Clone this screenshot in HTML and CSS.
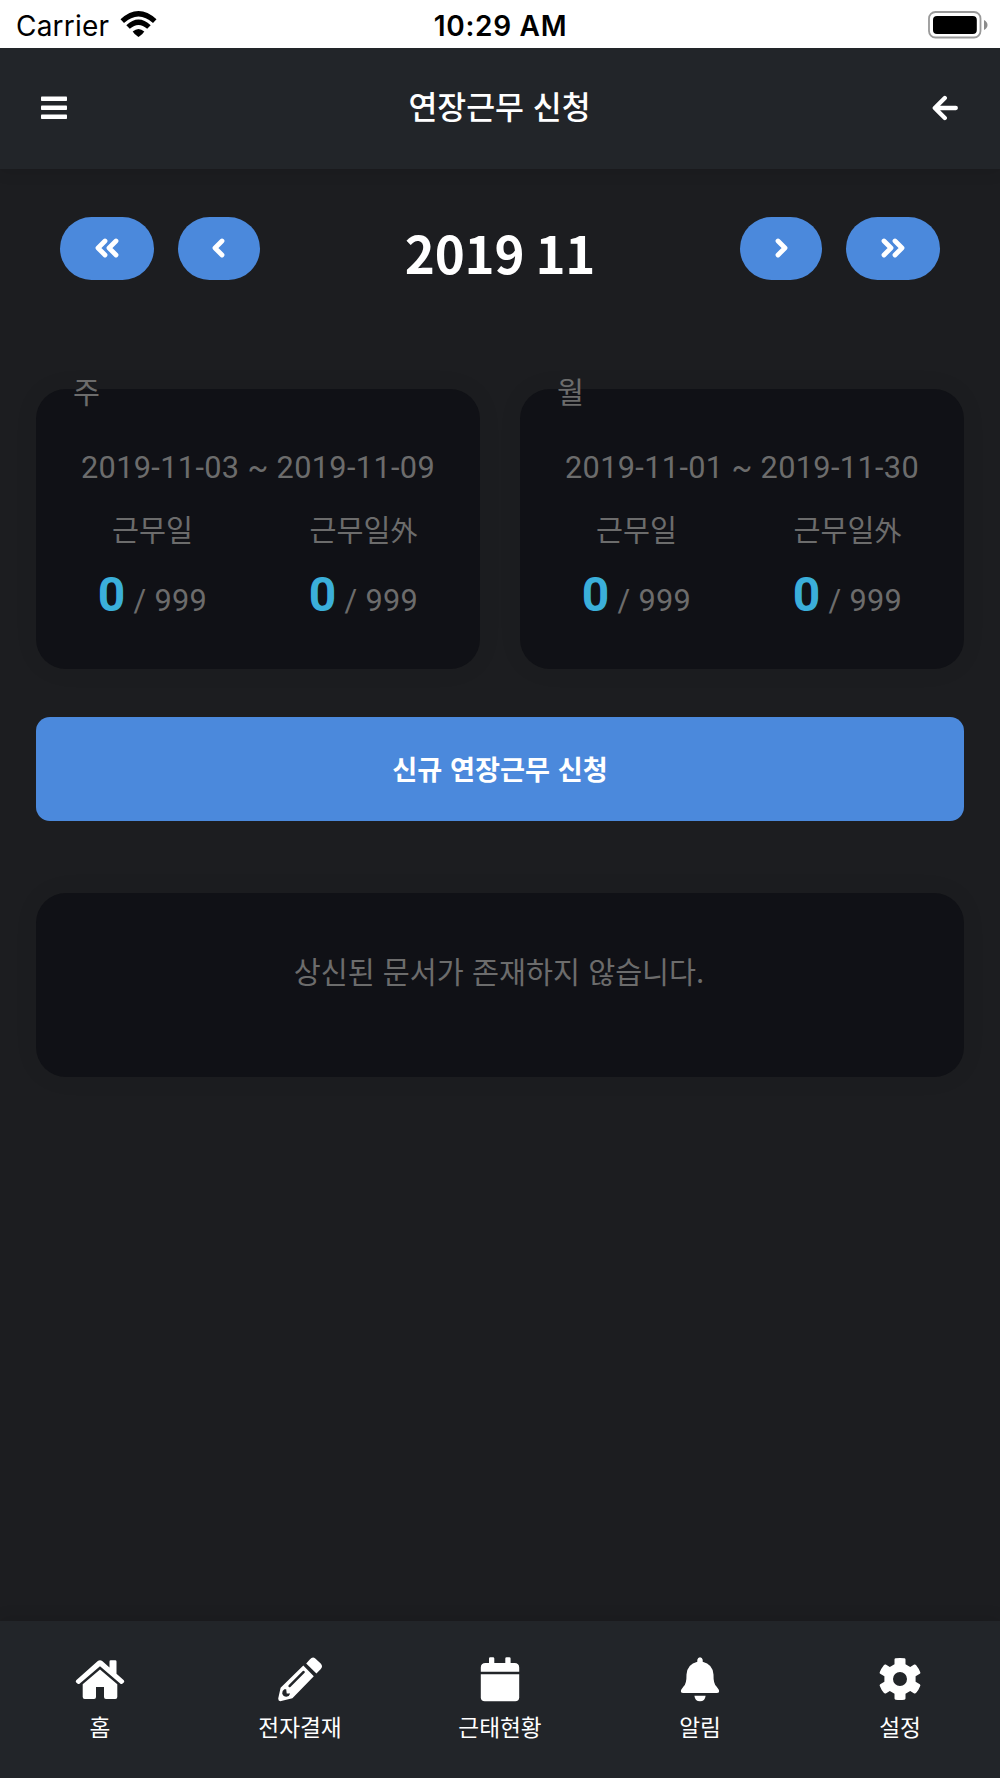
FILE: index.html
```html
<!DOCTYPE html>
<html lang="ko">
<head>
    <meta charset="UTF-8">
    <title>연장근무 신청</title>
    <link rel="stylesheet" href="styles.css">
</head>
<body>
<!-- Status bar -->
<div class="status-bar">
    <div class="carrier">
        <span>Carrier</span>
        <svg class="wifi" width="37" height="28" viewBox="0 0 37 28">
            <path d="M0.5 9.2Q18.5 -7.4 36.5 9.2L33 13Q18.5 0 4 13Z"/>
            <path d="M6.3 15.2Q18.5 3.8 30.7 15.2L27.2 18.8Q18.5 11 9.8 18.8Z"/>
            <path d="M12.7 21.4Q18.5 16.4 24.3 21.4Q23 24 18.5 27Q14 24 12.7 21.4Z"/>
        </svg>
    </div>
    <div class="clock">10:29 AM</div>
    <svg class="battery" width="60" height="28" viewBox="0 0 60 28">
        <rect x="1" y="1" width="51.5" height="25.5" rx="6.5" fill="none" stroke="#999" stroke-width="1.8"/>
        <rect x="5" y="5" width="43.8" height="18" rx="4" fill="#000"/>
        <path d="M56 9Q59.5 11 59.5 14Q59.5 17 56 19Z" fill="#8c8c8c"/>
    </svg>
</div>

<header class="header">
    <svg class="header-icon" width="26" height="24" viewBox="0 0 26 24" fill="#fff">
        <rect y="0.5" width="26" height="4.6" rx="0.8"/>
        <rect y="9.5" width="26" height="4.6" rx="0.8"/>
        <rect y="18.5" width="26" height="4.6" rx="0.8"/>
    </svg>
    <h1>연장근무 신청</h1>
    <svg class="header-icon" width="26" height="26" viewBox="0 0 26 26" fill="none" stroke="#fff" stroke-width="4.3" stroke-linecap="round" stroke-linejoin="round">
        <path d="M12.8 3L2.8 13L12.8 23M3 13H23.8"/>
    </svg>
</header>

<main class="content">
    <!-- Month navigation -->
    <div class="month-nav">
        <div class="nav-buttons">
            <button class="pill pill-wide">
                <svg width="24" height="20" viewBox="0 0 24 20"><path d="M10 3L3 10L10 17M21 3L14 10L21 17"/></svg>
            </button>
            <button class="pill">
                <svg width="13" height="20" viewBox="0 0 13 20"><path d="M10 3L3 10L10 17"/></svg>
            </button>
        </div>
        <h2>2019 11</h2>
        <div class="nav-buttons">
            <button class="pill">
                <svg width="13" height="20" viewBox="0 0 13 20"><path d="M3 3L10 10L3 17"/></svg>
            </button>
            <button class="pill pill-wide">
                <svg width="24" height="20" viewBox="0 0 24 20"><path d="M3 3L10 10L3 17M14 3L21 10L14 17"/></svg>
            </button>
        </div>
    </div>

    <!-- Weekly / monthly totals -->
    <div class="summary">
        <section class="card">
            <h3>주</h3>
            <p class="period">2019-11-03 ~ 2019-11-09</p>
            <div class="hours">
                <div class="hours-item">
                    <span class="label">근무일</span>
                    <span class="value"><b>0</b> / 999</span>
                </div>
                <div class="hours-item">
                    <span class="label">근무일<span class="hanja">外</span></span>
                    <span class="value"><b>0</b> / 999</span>
                </div>
            </div>
        </section>
        <section class="card">
            <h3>월</h3>
            <p class="period">2019-11-01 ~ 2019-11-30</p>
            <div class="hours">
                <div class="hours-item">
                    <span class="label">근무일</span>
                    <span class="value"><b>0</b> / 999</span>
                </div>
                <div class="hours-item">
                    <span class="label">근무일<span class="hanja">外</span></span>
                    <span class="value"><b>0</b> / 999</span>
                </div>
            </div>
        </section>
    </div>

    <button class="new-btn">신규 연장근무 신청</button>

    <div class="card empty">상신된 문서가 존재하지 않습니다.</div>
</main>

<!-- Bottom tabs -->
<nav class="tab-bar">
    <a class="tab">
        <svg width="50" height="46" viewBox="0 0 50 46" fill="#fff">
            <path d="M1.2 24.2L22.8 5Q25 3.4 27.2 5L34.5 11.5V5.5Q34.5 4.2 35.8 4.2H40.2Q41.5 4.2 41.5 5.5V17.7L48.8 24.2Q49.8 25.4 48.8 26.4L47.3 27.7Q46.2 28.4 45.2 27.5L25 10.2L4.8 27.5Q3.8 28.4 2.7 27.7L1.2 26.4Q0.2 25.4 1.2 24.2Z"/>
            <path d="M25 13.5L42.3 28.2V41Q42.3 43 40.3 43H31Q29 43 29 41V31H21V41Q21 43 19 43H9.7Q7.7 43 7.7 41V28.2Z"/>
        </svg>
        <span>홈</span>
    </a>
    <a class="tab">
        <svg width="46" height="46" viewBox="0 0 46 46" fill="#fff">
            <path d="M29.2 7.6L33 3.2Q35.5 0.4 38.3 2.4L43.7 7.6Q46.4 10.4 43.6 13.2L39.4 17.6Z"/>
            <path fill-rule="evenodd" d="M26.3 9.4L36.8 20.2L15.4 42.2L4.2 45Q1.2 45.7 1.2 42.5L3.6 31.8ZM25.8 15.1L11.6 29.3Q11 30.2 11.8 31Q12.6 31.6 13.4 31L27.6 16.8Q28.2 16 27.5 15.3Q26.7 14.5 25.8 15.1ZM7.4 33.2Q5 34.8 5.2 37.4Q6.4 40.6 9.4 40.8Q12.6 40.2 13.2 37.5H9.7L9.2 33.2Z"/>
        </svg>
        <span>전자결재</span>
    </a>
    <a class="tab">
        <svg width="40" height="46" viewBox="0 0 40 46" fill="#fff">
            <path d="M0.8 15.8V11.5Q0.8 7 5.5 7H9V2.5Q9 1.2 10.3 1.2H13Q14.3 1.2 14.3 2.5V7H25.3V2.5Q25.3 1.2 26.6 1.2H29.3Q30.6 1.2 30.6 2.5V7H34.5Q39.2 7 39.2 11.5V15.8Z"/>
            <path d="M0.8 18.3H39.2V41.2Q39.2 45.2 35.2 45.2H4.8Q0.8 45.2 0.8 41.2Z"/>
        </svg>
        <span>근태현황</span>
    </a>
    <a class="tab">
        <svg width="40" height="46" viewBox="0 0 40 46" fill="#fff">
            <path d="M17.3 5.8V3.8Q17.8 1.2 20 1.2Q22.2 1.2 22.7 3.8V5.8Q32.7 8.2 33.5 18.5Q33.3 28.2 36.7 30.8L38.8 33.7Q40 36.8 36.8 37.1H3.2Q0 36.8 1.2 33.7L3.3 30.8Q6.7 28.2 6.5 18.5Q7.3 8.2 17.3 5.8Z"/>
            <path d="M14.4 39.7H25.6Q25 45.2 20 45.2Q15 45.2 14.4 39.7Z"/>
        </svg>
        <span>알림</span>
    </a>
    <a class="tab">
        <svg width="42" height="46" viewBox="0 0 42 46" fill="#fff">
            <path fill-rule="evenodd" d="M15.5 3.4Q15.6 2.4 16.6 2.3Q21 1.6 25.4 2.3Q26.4 2.4 26.5 3.4V8.2L31.2 10.9L35.2 8.6Q36.2 8.1 37 8.9Q39.8 12.3 41.3 16.3Q41.6 17.3 40.8 17.8L36.6 20.3V25.7L40.8 28.2Q41.6 28.7 41.3 29.7Q39.8 33.7 37 37.1Q36.2 37.9 35.2 37.4L31.2 35.1L26.5 37.8V42.6Q26.4 43.6 25.4 43.7Q21 44.4 16.6 43.7Q15.6 43.6 15.5 42.6V37.8L10.8 35.1L6.8 37.4Q5.8 37.9 5 37.1Q2.2 33.7 0.7 29.7Q0.4 28.7 1.2 28.2L5.4 25.7V20.3L1.2 17.8Q0.4 17.3 0.7 16.3Q2.2 12.3 5 8.9Q5.8 8.1 6.8 8.6L10.8 10.9L15.5 8.2ZM21 16A7 7 0 1 0 21 30A7 7 0 1 0 21 16Z"/>
        </svg>
        <span>설정</span>
    </a>
</nav>
</body>
</html>
```
FILE: styles.css
```css
* {
    box-sizing: border-box;
}
body {
    margin: 0;
    height: 1778px;
    display: flex;
    flex-direction: column;
    background-color: #1c1d20;
    color: #fff;
    font-family: "Noto Sans CJK KR", sans-serif;
    overflow: hidden;
}
h1, h2, h3, p {
    margin: 0;
}
button {
    border: none;
    color: #fff;
    background-color: #4b89dc;
    font-family: inherit;
    cursor: pointer;
}

/* Status bar */
.status-bar {
    flex: none;
    position: relative; /* keeps the header shadow below it */
    z-index: 1;
    height: 48px;
    padding: 0 12px 0 16px;
    display: grid;
    grid-template-columns: 1fr auto 1fr;
    align-items: center;
    background-color: #fff;
    color: #000;
    font-family: Inter, sans-serif;
    font-size: 28px;
    line-height: 48px;
}
.carrier {
    display: flex;
    align-items: center;
    gap: 11px;
    letter-spacing: 0.2px;
}
.wifi {
    margin-bottom: 3px;
}
.clock {
    padding: 2px 3px 0 0;
    font-weight: 600;
    letter-spacing: 0.7px;
}
.carrier span {
    padding-top: 2px;
}
.battery {
    justify-self: end;
}

/* Header */
.header {
    flex: none;
    height: 121px;
    padding: 0 42px 2px 41px;
    display: flex;
    align-items: center;
    justify-content: space-between;
    background-color: #222529;
    box-shadow: 0 0 16px rgba(0, 0, 0, 0.15);
}
.header h1 {
    margin-bottom: 3px;
    font-size: 31.4px;
    font-weight: 500;
    line-height: 48px;
}

.content {
    flex: 1;
    padding: 48px 36px 0;
}

/* Month navigation */
.month-nav {
    display: flex;
    justify-content: space-between;
    align-items: flex-start;
    height: 172px;
    padding: 0 24px;
}
.month-nav h2 {
    font-size: 51px;
    font-weight: 700;
    line-height: 70px;
    letter-spacing: -0.2px;
    word-spacing: -3px;
}
.nav-buttons {
    display: flex;
    gap: 24px;
}
.pill {
    width: 82px;
    height: 63px;
    padding: 0 0 2px;
    border-radius: 32px;
    display: flex;
    align-items: center;
    justify-content: center;
}
.pill-wide {
    width: 93.5px;
}
.pill svg {
    fill: none;
    stroke: #fff;
    stroke-width: 4.8;
    stroke-linecap: round;
    stroke-linejoin: round;
}

/* Cards */
.summary {
    display: grid;
    grid-template-columns: 1fr 1fr;
    gap: 40px;
    margin-bottom: 48px;
}
.card {
    border-radius: 30px;
    background-color: #101116;
    color: #6c6c6c;
    font-size: 29.33px;
    box-shadow: 0 0 26px rgba(0, 0, 0, 0.06);
}
.summary .card {
    height: 280px;
    padding: 0 11px;
}
.card h3 {
    margin: -21px 0 0 26px;
    font-size: 29.33px;
    font-weight: 400;
    line-height: 44px;
}
.period {
    margin-top: 34px;
    font-family: Roboto, sans-serif;
    font-size: 30.7px;
    letter-spacing: 0.35px;
    line-height: 44px;
    text-align: center;
    white-space: nowrap;
}
.hours {
    display: grid;
    grid-template-columns: 1fr 1fr;
    margin-top: 16px;
}
.hours-item {
    display: flex;
    flex-direction: column;
    align-items: center;
}
.label {
    height: 44px;
    line-height: 44px;
    white-space: nowrap;
}
.hanja {
    font-size: 27px;
    line-height: 1;
}
.value {
    margin-top: 15px;
    font-family: Roboto, sans-serif;
    font-size: 30.7px;
    letter-spacing: 0.3px;
    line-height: 60px;
    white-space: nowrap;
}
.value b {
    font-size: 48px;
    color: #3bafda;
}

.new-btn {
    display: block;
    width: 100%;
    height: 104px;
    padding-bottom: 3px;
    border-radius: 14px;
    font-size: 27.2px;
    font-weight: 700;
}
.empty {
    height: 184px;
    margin-top: 72px;
    padding: 55px 2px 0 0;
    line-height: 44px;
    text-align: center;
}

/* Bottom tabs */
.tab-bar {
    flex: none;
    height: 157px;
    padding-top: 35px;
    display: grid;
    grid-template-columns: repeat(5, 1fr);
    background-color: #222529;
    box-shadow: 0 0 16px rgba(0, 0, 0, 0.15);
}
.tab {
    display: flex;
    flex-direction: column;
    align-items: center;
    gap: 9px;
    font-size: 22.67px;
    line-height: 32px;
}
```
